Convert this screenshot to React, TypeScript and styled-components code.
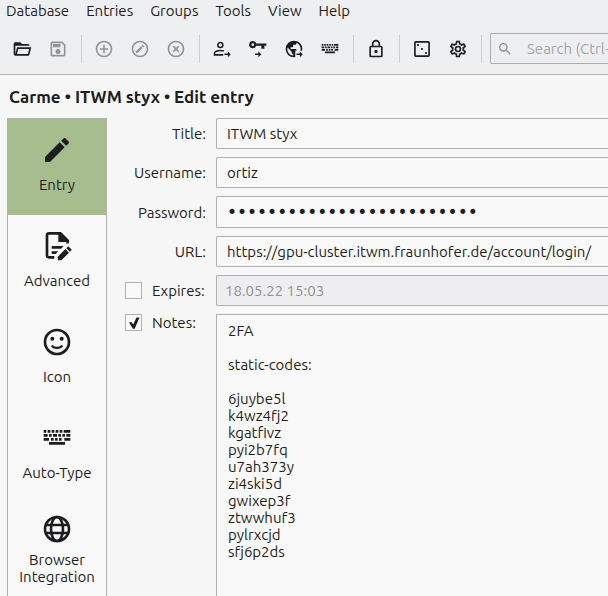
import React from "react";
import styled, { createGlobalStyle } from "styled-components";

const Global = createGlobalStyle`
  * { box-sizing: border-box; }
  html, body, #root { height: 100%; }
  body {
    margin: 0;
    background: #f7f7f7;
    color: #1d1d20;
    font-family: Ubuntu, "Noto Sans", sans-serif;
    font-size: 15px;
    line-height: 17px;
    overflow: hidden;
  }
  button, input, textarea { font: inherit; color: inherit; }
`;

const Window = styled.div`
  display: flex;
  flex-direction: column;
  min-height: 100%;
`;

const Header = styled.header`
  background: #eeeff1;
  border-bottom: 1px solid #b4b4b4;
`;

const MenuBar = styled.nav`
  display: flex;
  gap: 17px;
  height: 23px;
  padding: 0 6px 2px;
  align-items: center;
`;

const MenuItem = styled.button`
  border: 0;
  padding: 0;
  background: none;
`;

const ToolBar = styled.div`
  display: flex;
  align-items: center;
  height: 51px;
  padding-left: 4px;
`;

const ToolButton = styled.button`
  display: grid;
  place-items: center;
  flex: none;
  width: 36px;
  height: 36px;
  border: 0;
  padding: 0;
  background: none;
  color: #1d1d20;
  &:disabled { color: #939395; }
`;

const Separator = styled.span`
  flex: none;
  width: 1px;
  height: 28px;
  margin: 0 4px 0 5px;
  background: #cfcfd1;
`;

const SearchBox = styled.label`
  display: flex;
  align-items: center;
  flex: 1;
  min-width: 0;
  height: 31px;
  margin-left: 4px;
  padding-left: 6px;
  gap: 14px;
  border: 1px solid #adadaf;
  border-right: 0;
  border-radius: 2px 0 0 2px;
  color: #8e8e90;
`;

const SearchInput = styled.input`
  flex: 1;
  min-width: 0;
  border: 0;
  padding: 0;
  outline: 0;
  background: none;
  &::placeholder { color: #a3a4a8; opacity: 1; }
`;

const Heading = styled.h1`
  margin: 0;
  padding: 13px 9px 12px;
  font-size: 17px;
  line-height: 18px;
  font-weight: 700;
`;

const Content = styled.main`
  display: flex;
  flex: 1;
  gap: 18px;
  padding-left: 7px;
`;

const SideBar = styled.nav`
  flex: none;
  width: 100px;
  border: 1px solid #b0b0b0;
  border-bottom: 0;
  background: #f9f9f9;
`;

const SideItem = styled.button<{ $active?: boolean; $tall?: boolean }>`
  display: flex;
  flex-direction: column;
  align-items: center;
  gap: ${(p) => (p.$tall ? 6 : 10)}px;
  width: 100%;
  height: 96px;
  padding: ${(p) => (p.$tall ? 10 : 15)}px 8px 0;
  border: 0;
  background: ${(p) => (p.$active ? "#a6be8e" : "transparent")};
`;

const Form = styled.form`
  display: grid;
  grid-template-columns: 81px 1fr;
  grid-template-rows: repeat(5, auto) 1fr;
  gap: 8px 10px;
  flex: 1;
  min-width: 0;
`;

const Label = styled.label`
  align-self: center;
  justify-self: end;
`;

const CheckLabel = styled.label<{ $top?: boolean }>`
  display: flex;
  align-items: center;
  align-self: ${(p) => (p.$top ? "start" : "center")};
  gap: 10px;
`;

const CheckBox = styled.input`
  appearance: none;
  flex: none;
  width: 17px;
  height: 17px;
  margin: 0;
  border: 1px solid #b0b0b0;
  background: #f9f9f9;
  &:checked::before {
    content: "";
    display: block;
    width: 15px;
    height: 15px;
    background: #1d1d20;
    clip-path: polygon(20% 50%, 36% 46%, 48% 64%, 70% 16%, 90% 16%, 58% 92%, 46% 92%);
  }
`;

const Field = styled.input`
  width: 100%;
  min-width: 0;
  height: 31px;
  padding: 0 10px;
  border: 1px solid #b0b0b0;
  border-right: 0;
  border-radius: 2px 0 0 2px;
  outline: 0;
  background: #f9f9f9;
  &:disabled {
    padding-left: 8px;
    background: #eeeef0;
    color: #919194;
  }
`;

const PasswordField = styled(Field)`
  height: 32px;
  font-family: "DejaVu Sans", sans-serif;
  font-size: 17px;
`;

const Notes = styled.textarea`
  width: 100%;
  height: 100%;
  padding: 7px 11px;
  border: 1px solid #b0b0b0;
  border-right: 0;
  border-bottom: 0;
  outline: 0;
  resize: none;
  background: #f9f9f9;
`;

type IconProps = { size?: number; children: React.ReactNode };
const Icon = ({ size = 20, children }: IconProps) => (
  <svg width={size} height={size} viewBox="0 0 24 24" fill="currentColor" aria-hidden="true">
    {children}
  </svg>
);

const ring = "M12 20C7.6 20 4 16.4 4 12S7.6 4 12 4s8 3.6 8 8-3.6 8-8 8M12 2a10 10 0 1 0 0 20 10 10 0 0 0 0-20";

const FolderIcon = () => <Icon><path d="M6.1 10 4 18V8h17a2 2 0 0 0-2-2h-7l-2-2H4a2 2 0 0 0-2 2v12a2 2 0 0 0 2 2h15c.9 0 1.7-.6 1.9-1.5L23.2 10H6.1M19 18H6l1.6-6h13L19 18Z" /></Icon>;
const SaveIcon = () => <Icon><path d="M17 3H5c-1.1 0-2 .9-2 2v14c0 1.1.9 2 2 2h14c1.1 0 2-.9 2-2V7l-4-4m2 16H5V5h11.2L19 7.8V19m-7-7a3 3 0 1 0 0 6 3 3 0 0 0 0-6M6 6h9v4H6V6Z" /></Icon>;
const AddIcon = () => <Icon><path d={ring + "M13 7h-2v4H7v2h4v4h2v-4h4v-2h-4V7Z"} /></Icon>;
const EditIcon = () => <Icon><path d={ring + "M15.1 7.07c.14 0 .28.05.4.16l1.27 1.27c.23.22.23.57 0 .78l-1 1-2.05-2.05 1-1c.1-.11.24-.16.38-.16m-1.97 1.74 2.06 2.06-6.06 6.06H7.07v-2.06l6.06-6.06Z"} /></Icon>;
const RemoveIcon = () => <Icon><path d={ring + "M14.59 8 12 10.59 9.41 8 8 9.41 10.59 12 8 14.59 9.41 16 12 13.41 14.59 16 16 14.59 13.41 12 16 9.41 14.59 8Z"} /></Icon>;
const SmallArrow = () => <path d="M15 17.5h4V15l3.500 3.400-3.500 3.400v-2.500h-4Z" />;
const UserIcon = () => (
  <Icon>
    <circle cx="10" cy="7.2" r="3" fill="none" stroke="currentColor" strokeWidth="1.9" />
    <path d="M13.5 19H3v-2c0-2 3.500-3.300 7-3.300 1.600 0 3 .3 4.200.8" fill="none" stroke="currentColor" strokeWidth="1.9" />
    <SmallArrow />
  </Icon>
);
const KeyIcon = () => (
  <Icon>
    <path fillRule="evenodd" d="M5.8 2.5a4.300 4.300 0 1 0 4 5.700H16v3.400h3.600V8.200H22V5.300H9.800a4.300 4.300 0 0 0-4-2.800m0 2.700a1.600 1.600 0 1 1 0 3.200 1.600 1.600 0 0 1 0-3.200" />
    <path d="M8.500 17.500h4V15l3.500 3.400-3.500 3.400v-2.500h-4Z" />
  </Icon>
);
const EarthIcon = () => (
  <Icon>
    <clipPath id="earth-cut"><path d="M0 0h24v14H13.500v10H0Z" /></clipPath>
    <path clipPath="url(#earth-cut)" d="M17.9,17.39C17.64,16.59 16.89,16 16,16H15V13A1,1 0 0,0 14,12H8V10H10A1,1 0 0,0 11,9V7H13A2,2 0 0,0 15,5V4.59C17.93,5.77 20,8.64 20,12C20,14.08 19.2,15.97 17.9,17.39M11,19.93C7.05,19.44 4,16.08 4,12C4,11.38 4.08,10.78 4.21,10.21L9,15V16A2,2 0 0,0 11,18M12,2A10,10 0 0,0 2,12A10,10 0 0,0 12,22A10,10 0 0,0 22,12A10,10 0 0,0 12,2Z" />
    <SmallArrow />
  </Icon>
);
const KeyboardIcon = ({ size }: { size?: number }) => (
  <Icon size={size}>
    <path d="M2 6h2v2H2zM5 6h2v2H5zM8 6h2v2H8zM11 6h2v2h-2zM14 6h2v2h-2zM17 6h5v2h-5zM2 9h3v2H2zM6 9h2v2H6zM9 9h3v2H9zM13 9h2v2h-2zM16 9h2v2h-2zM19 9h3v2h-3zM2 12h4v2H2zM7.5 12h2v2h-2zM10.5 12h2v2h-2zM13.5 12h2v2h-2zM17.5 12H22v2h-4.5zM6 15h12v2H6z" />
  </Icon>
);
const LockIcon = () => <Icon><path d="M12 17a2 2 0 1 1 0-4 2 2 0 0 1 0 4m6 3V10H6v10h12m0-12a2 2 0 0 1 2 2v10a2 2 0 0 1-2 2H6a2 2 0 0 1-2-2V10c0-1.1.9-2 2-2h1V6a5 5 0 0 1 10 0v2h1m-6-5a3 3 0 0 0-3 3v2h6V6a3 3 0 0 0-3-3Z" /></Icon>;
const DiceIcon = () => (
  <Icon>
    <rect x="3.5" y="3.5" width="17" height="17" rx="1" fill="none" stroke="currentColor" strokeWidth="2" />
    <circle cx="7.2" cy="7.2" r="1.3" /><circle cx="12" cy="12" r="1.3" /><circle cx="16.8" cy="16.8" r="1.3" />
  </Icon>
);
const CogIcon = () => <Icon><path d="M12,8A4,4 0 0,1 16,12A4,4 0 0,1 12,16A4,4 0 0,1 8,12A4,4 0 0,1 12,8M12,10A2,2 0 0,0 10,12A2,2 0 0,0 12,14A2,2 0 0,0 14,12A2,2 0 0,0 12,10M10,22C9.75,22 9.54,21.82 9.5,21.58L9.13,18.93C8.5,18.68 7.96,18.34 7.44,17.94L4.95,18.95C4.73,19.03 4.46,18.95 4.34,18.73L2.34,15.27C2.21,15.05 2.27,14.78 2.46,14.63L4.57,12.97L4.5,12L4.57,11L2.46,9.37C2.27,9.22 2.21,8.95 2.34,8.73L4.34,5.27C4.46,5.05 4.73,4.96 4.95,5.05L7.44,6.05C7.96,5.66 8.5,5.32 9.13,5.07L9.5,2.42C9.54,2.18 9.75,2 10,2H14C14.25,2 14.46,2.18 14.5,2.42L14.87,5.07C15.5,5.32 16.04,5.66 16.56,6.05L19.05,5.05C19.27,4.96 19.54,5.05 19.66,5.27L21.66,8.73C21.79,8.95 21.73,9.22 21.54,9.37L19.43,11L19.5,12L19.43,13L21.54,14.63C21.73,14.78 21.79,15.05 21.66,15.27L19.66,18.73C19.54,18.95 19.27,19.04 19.05,18.95L16.56,17.95C16.04,18.34 15.5,18.68 14.87,18.93L14.5,21.58C14.46,21.82 14.25,22 14,22H10M11.25,4L10.88,6.61C9.68,6.86 8.62,7.5 7.85,8.39L5.44,7.35L4.69,8.65L6.8,10.2C6.4,11.37 6.4,12.64 6.8,13.8L4.68,15.36L5.43,16.66L7.86,15.62C8.63,16.5 9.68,17.14 10.87,17.38L11.24,20H12.76L13.13,17.39C14.32,17.14 15.37,16.5 16.14,15.62L18.57,16.66L19.32,15.36L17.2,13.81C17.6,12.64 17.6,11.37 17.2,10.2L19.31,8.65L18.56,7.35L16.15,8.39C15.38,7.5 14.32,6.86 13.12,6.62L12.75,4H11.25Z" /></Icon>;
const SearchIcon = () => <Icon size={16}><path d="M9.5,3A6.5,6.5 0 0,1 16,9.5C16,11.11 15.41,12.59 14.44,13.73L14.71,14H15.5L20.5,19L19,20.5L14,15.5V14.71L13.73,14.44C12.59,15.41 11.11,16 9.5,16A6.5,6.5 0 0,1 3,9.5A6.5,6.5 0 0,1 9.5,3M9.5,5C7,5 5,7 5,9.5C5,12 7,14 9.5,14C12,14 14,12 14,9.5C14,7 12,5 9.5,5Z" /></Icon>;

const PencilIcon = () => <Icon size={32}><path d="M20.71,7.04C21.1,6.65 21.1,6 20.71,5.63L18.37,3.29C18,2.9 17.35,2.9 16.96,3.29L15.12,5.12L18.87,8.87M3,17.25V21H6.75L17.81,9.93L14.06,6.18L3,17.25Z" /></Icon>;
const DocumentIcon = () => (
  <Icon size={32}>
    <path d="M10 20.5H6A1.5 1.5 0 0 1 4.5 19V4A1.5 1.5 0 0 1 6 2.5h8.5" fill="none" stroke="currentColor" strokeWidth="2" />
    <path d="M13 1.5h2l6 6V10c-1 0-1.5.3-2 .8V9h-6ZM8 12h9l-2 2H8zM8 16h5l-2 2H8zM20.8 12.5l1.9 1.9c.3.3.3.6 0 .9l-1 1-2.7-2.7 1-1c.2-.2.6-.3.8-.1M18.3 14.3l2.7 2.7-5.7 5.7h-2.7V20Z" />
  </Icon>
);
const SmileIcon = () => (
  <Icon size={32}>
    <path d={ring} />
    <circle cx="8.5" cy="9.5" r="1.5" /><circle cx="15.5" cy="9.5" r="1.5" />
    <path d="M8.5 15.2c1.5 1.6 5.5 1.6 7 0" fill="none" stroke="currentColor" strokeWidth="1.8" strokeLinecap="round" />
  </Icon>
);
const WebIcon = () => (
  <Icon size={32}>
    <g fill="none" stroke="currentColor" strokeWidth="2">
      <circle cx="12" cy="12" r="9" /><ellipse cx="12" cy="12" rx="4.5" ry="9" /><path d="M3.5 9h17M3.5 15h17" />
    </g>
  </Icon>
);

const menus = ["Database", "Entries", "Groups", "Tools", "View", "Help"];

type Tool = { name: string; icon: React.ReactNode; disabled?: boolean };

const toolGroups: Tool[][] = [
  [
    { name: "Open database", icon: <FolderIcon /> },
    { name: "Save database", icon: <SaveIcon />, disabled: true },
  ],
  [
    { name: "Add entry", icon: <AddIcon />, disabled: true },
    { name: "Edit entry", icon: <EditIcon />, disabled: true },
    { name: "Delete entry", icon: <RemoveIcon />, disabled: true },
  ],
  [
    { name: "Copy username", icon: <UserIcon /> },
    { name: "Copy password", icon: <KeyIcon /> },
    { name: "Copy URL", icon: <EarthIcon /> },
    { name: "Perform Auto-Type", icon: <KeyboardIcon /> },
  ],
  [{ name: "Lock database", icon: <LockIcon /> }],
  [
    { name: "Password generator", icon: <DiceIcon /> },
    { name: "Settings", icon: <CogIcon /> },
  ],
];

const pages = [
  { name: "Entry", icon: <PencilIcon />, active: true },
  { name: "Advanced", icon: <DocumentIcon /> },
  { name: "Icon", icon: <SmileIcon /> },
  { name: "Auto-Type", icon: <KeyboardIcon size={32} /> },
  { name: "Browser Integration", icon: <WebIcon />, tall: true },
];

const notes = `2FA

static-codes:

6juybe5l
k4wz4fj2
kgatfivz
pyi2b7fq
u7ah373y
zi4ski5d
gwixep3f
ztwwhuf3
pylrxcjd
sfj6p2ds`;

export default function App() {
  return (
    <Window>
      <Global />
      <Header>
        <MenuBar>{menus.map((m) => <MenuItem key={m}>{m}</MenuItem>)}</MenuBar>
        <ToolBar>
          {toolGroups.map((group, i) => (
            <React.Fragment key={i}>
              {group.map((t) => (
                <ToolButton key={t.name} aria-label={t.name} disabled={t.disabled}>{t.icon}</ToolButton>
              ))}
              <Separator />
            </React.Fragment>
          ))}
          <SearchBox>
            <SearchIcon />
            <SearchInput aria-label="Search" placeholder="Search (Ctrl+F)…" />
          </SearchBox>
        </ToolBar>
      </Header>
      <Heading>Carme • ITWM styx • Edit entry</Heading>
      <Content>
        <SideBar>
          {pages.map((p) => (
            <SideItem key={p.name} $active={p.active} $tall={p.tall}>
              {p.icon}
              <span>{p.name}</span>
            </SideItem>
          ))}
        </SideBar>
        <Form>
          <Label htmlFor="title">Title:</Label>
          <Field id="title" defaultValue="ITWM styx" />
          <Label htmlFor="username">Username:</Label>
          <Field id="username" defaultValue="ortiz" />
          <Label htmlFor="password">Password:</Label>
          <PasswordField id="password" type="password" defaultValue={"x".repeat(25)} />
          <Label htmlFor="url">URL:</Label>
          <Field id="url" defaultValue="https://gpu-cluster.itwm.fraunhofer.de/account/login/" />
          <CheckLabel><CheckBox type="checkbox" />Expires:</CheckLabel>
          <Field aria-label="Expiry date" disabled defaultValue="18.05.22 15:03" />
          <CheckLabel $top><CheckBox type="checkbox" defaultChecked />Notes:</CheckLabel>
          <Notes aria-label="Notes" defaultValue={notes} />
        </Form>
      </Content>
    </Window>
  );
}
